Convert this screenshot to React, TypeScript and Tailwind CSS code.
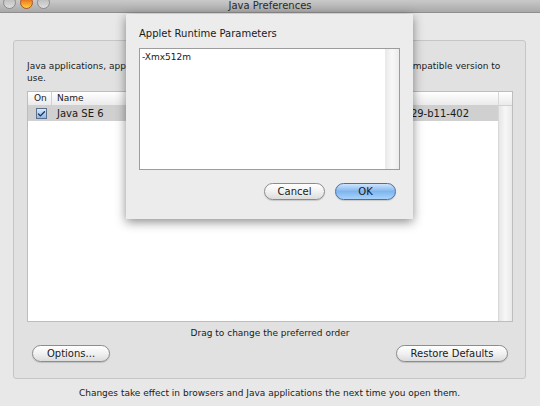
import { Check } from "lucide-react";

const font = { fontFamily: '"DejaVu Sans", "Noto Sans", sans-serif' };

function AquaButton({ label, width, primary }: { label: string; width: string; primary?: boolean }) {
  return (
    <button
      className={
        "h-[17px] rounded-full border text-[10px] leading-none text-[#1a1a1a] shadow-[0_1px_1px_rgba(0,0,0,0.15)] " +
        width +
        (primary
          ? " border-[#4a6fa8] bg-gradient-to-b from-[#cfe4fb] via-[#7fb5ef] to-[#a9d3fb]"
          : " border-[#8c8c8c] bg-gradient-to-b from-[#ffffff] via-[#f1f1f1] to-[#dcdcdc]")
      }
    >
      {label}
    </button>
  );
}

export default function App() {
  return (
    <div className="relative w-[540px] h-[406px] overflow-hidden bg-[#e8e8e8] text-[#1a1a1a]" style={font}>
      {/* title bar */}
      <div className="relative h-[13px] border-b border-[#8e8e8e] bg-gradient-to-b from-[#c9c9c9] to-[#a9a9a9]">
        <div className="absolute left-[3px] top-[-4px] flex gap-[4px]">
          <span className="w-[13px] h-[13px] rounded-full border border-[#8a8a8a] bg-gradient-to-b from-[#b5b5b5] to-[#dedede]" />
          <span className="w-[13px] h-[13px] rounded-full border border-[#b0531a] bg-gradient-to-b from-[#e0501a] to-[#ffd03a]" />
          <span className="w-[13px] h-[13px] rounded-full border border-[#8a8a8a] bg-gradient-to-b from-[#b5b5b5] to-[#dedede]" />
        </div>
        <div className="text-center text-[10px] leading-[12px] text-[#2a2a2a]">Java Preferences</div>
      </div>

      {/* main content */}
      <div className="pl-[13px] pr-[14px] pt-[27px]">
        <div className="h-[339px] rounded-[3px] border border-[#c6c6c6] bg-[#e1e1e1] pl-[13px] pr-[12px] pt-[19px] flex flex-col">
          <p className="text-[9px] leading-[12px]">
            <span className="whitespace-nowrap">
              Java applications, applets, and Java Web Start applications will always use the first compatible version to
            </span>
            <br />
            use.
          </p>
          <div className="mt-[7px] h-[231px] border border-[#bdbdbd] bg-white flex">
            <div className="flex-1 flex flex-col">
              <div className="h-[14px] flex items-center text-[9px] border-b border-[#d0d0d0] bg-gradient-to-b from-[#ffffff] to-[#ebebeb]">
                <span className="w-[24px] pl-[6px] border-r border-[#d0d0d0]">On</span>
                <span className="pl-[5px] w-[180px] border-r border-[#d0d0d0]">Name</span>
                <span className="pl-[5px]">Version</span>
              </div>
              <div className="h-[15px] flex items-center bg-[#d0d0d0] text-[10px]">
                <span className="w-[24px] flex justify-center pl-[2px]">
                  <span className="w-[11px] h-[11px] border border-[#5a6f8c] bg-gradient-to-b from-[#d8e8f8] to-[#8db9e8] flex items-center justify-center">
                    <Check size={10} strokeWidth={3.5} className="text-[#1d2f5a]" />
                  </span>
                </span>
                <span className="pl-[5px] w-[180px]">Java SE 6</span>
                <span className="flex-1 text-right pr-[29px]">1.6.0_29-b11-402</span>
              </div>
            </div>
            <div className="w-[14px] border-l border-[#d8d8d8] flex flex-col">
              <div className="h-[14px] border-b border-[#d0d0d0] bg-gradient-to-b from-[#ffffff] to-[#ebebeb]" />
              <div className="flex-1 bg-gradient-to-r from-[#e6e6e6] via-[#f7f7f7] to-[#e9e9e9]" />
            </div>
          </div>
          <p className="mt-[6px] text-center text-[9px] leading-[11px]">Drag to change the preferred order</p>
          <div className="mt-[6px] flex justify-between pl-[5px] pr-[5px]">
            <AquaButton label="Options..." width="w-[78px]" />
            <AquaButton label="Restore Defaults" width="w-[112px]" />
          </div>
        </div>
        <p className="mt-[8px] text-center text-[9px] leading-[12px]">
          Changes take effect in browsers and Java applications the next time you open them.
        </p>
      </div>

      {/* sheet */}
      <div className="absolute left-[126px] top-[14px] w-[287px] h-[205px] bg-[#ececec] shadow-[0_3px_10px_rgba(0,0,0,0.45)] px-[13px] pt-[13px]">
        <div className="text-[10px] leading-[13px]">Applet Runtime Parameters</div>
        <div className="mt-[8px] h-[122px] border border-[#9c9c9c] bg-white flex">
          <div className="flex-1 text-[9px] leading-[12px] pl-[2px] pt-[2px]">-Xmx512m</div>
          <div className="w-[14px] bg-gradient-to-r from-[#e8e8e8] via-[#f8f8f8] to-[#ececec]" />
        </div>
        <div className="mt-[13px] flex justify-end gap-[10px] pr-[4px]">
          <AquaButton label="Cancel" width="w-[61px]" />
          <AquaButton label="OK" width="w-[61px]" primary />
        </div>
      </div>
    </div>
  );
}
